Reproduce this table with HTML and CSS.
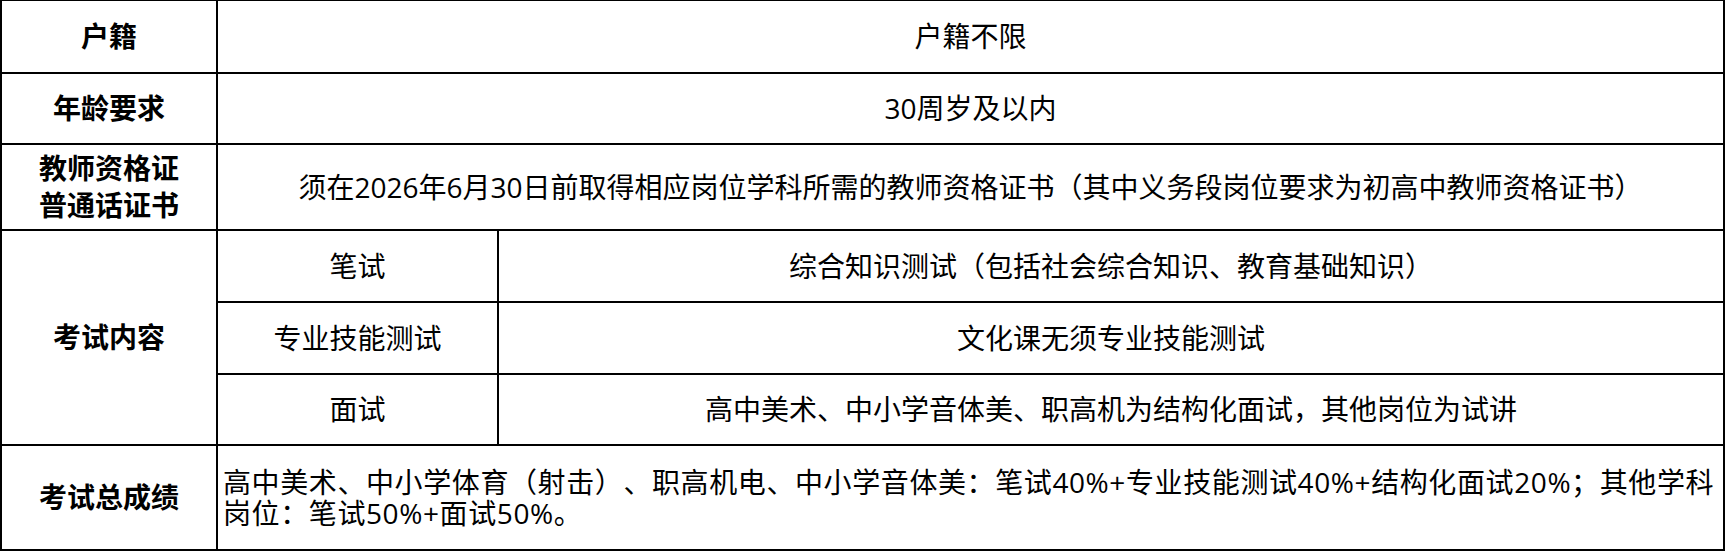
FILE: index.html
```html
<!DOCTYPE html>
<html lang="zh-CN">
<head>
<meta charset="utf-8">
<title>招聘条件</title>
<link rel="stylesheet" href="styles.css">
</head>
<body>
<table class="info">
  <colgroup>
    <col class="c-head">
    <col class="c-sub">
    <col class="c-main">
  </colgroup>
  <tbody>
    <tr class="r1">
      <th>户籍</th>
      <td colspan="2">户籍不限</td>
    </tr>
    <tr class="r2">
      <th>年龄要求</th>
      <td colspan="2">30周岁及以内</td>
    </tr>
    <tr class="r3">
      <th class="two">教师资格证<br>普通话证书</th>
      <td colspan="2">须在2026年6月30日前取得相应岗位学科所需的教师资格证书（其中义务段岗位要求为初高中教师资格证书）</td>
    </tr>
    <tr class="r4">
      <th rowspan="3">考试内容</th>
      <td>笔试</td>
      <td>综合知识测试（包括社会综合知识、教育基础知识）</td>
    </tr>
    <tr class="r5">
      <td>专业技能测试</td>
      <td>文化课无须专业技能测试</td>
    </tr>
    <tr class="r6">
      <td>面试</td>
      <td>高中美术、中小学音体美、职高机为结构化面试，其他岗位为试讲</td>
    </tr>
    <tr class="r7">
      <th>考试总成绩</th>
      <td colspan="2" class="left">高中美术、中小学体育（射击）、职高机电、中小学音体美：笔试40%+专业技能测试40%+结构化面试20%；其他学科岗位：笔试50%+面试50%。</td>
    </tr>
  </tbody>
</table>
</body>
</html>
```

FILE: styles.css
```css
html, body {
  margin: 0;
  padding: 0;
  background: #fff;
}

.info {
  width: 1725px;
  table-layout: fixed;
  border-collapse: separate;
  border-spacing: 0;
  border-left: 2px solid #000;
  border-top: 1px solid #000;
  font-family: "Open Sans", "Noto Sans CJK SC", sans-serif;
  font-size: 28px;
  color: #000;
  text-spacing-trim: space-all;
}

.c-head { width: 216px; }
.c-sub { width: 281px; }

.info th,
.info td {
  box-sizing: border-box;
  border-right: 2px solid #000;
  border-bottom: 2px solid #000;
  padding: 0 4px;
  text-align: center;
  vertical-align: middle;
  line-height: 31px;
}

.info th {
  font-weight: bold;
}

.info th.two {
  line-height: 37px;
}

.info td.left {
  text-align: left;
  padding-left: 5px;
  letter-spacing: 0.6px;
}

.r1 > * { height: 73px; }
.r2 > * { height: 71px; }
.r3 > * { height: 86px; }
.r4 > td { height: 72px; }
.r5 > td { height: 72px; }
.r6 > td { height: 71px; }
.r7 > * { height: 105px; }
```
